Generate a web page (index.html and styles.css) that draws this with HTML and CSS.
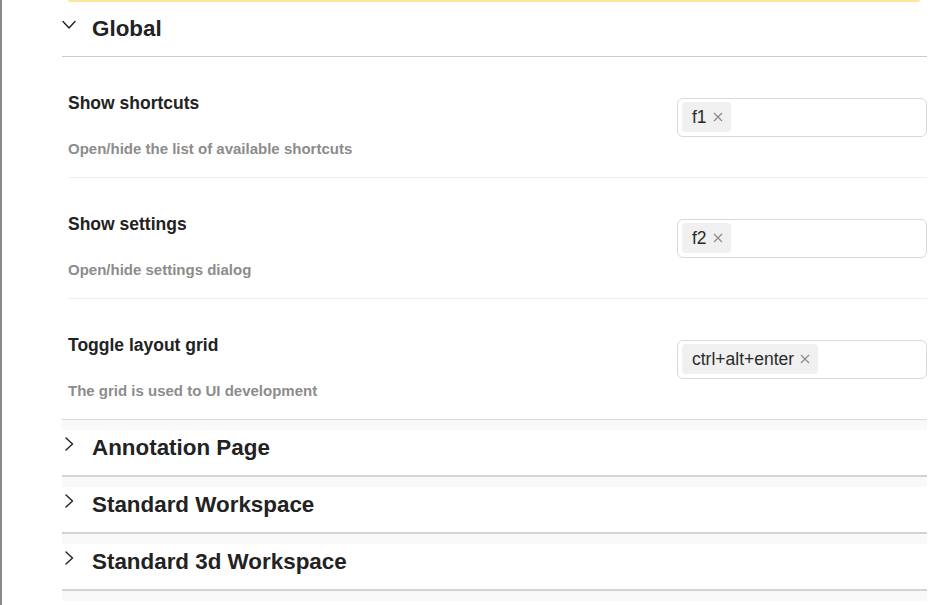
FILE: index.html
```html
<!DOCTYPE html>
<html lang="en">
<head>
<meta charset="utf-8">
<title>Shortcuts settings</title>
<link rel="stylesheet" href="styles.css">
</head>
<body>
<div class="app">
  <div class="content">
    <div class="notice-edge"></div>

    <section class="group group-open">
      <div class="group-header">
        <svg class="chev" viewBox="0 0 14 14" width="14" height="14"><polyline points="1,3.5 7,10 13,3.5"/></svg>
        <h2 class="group-title">Global</h2>
      </div>
      <div class="group-body">
        <div class="row">
          <div class="row-text">
            <div class="row-title">Show shortcuts</div>
            <div class="row-desc">Open/hide the list of available shortcuts</div>
          </div>
          <div class="keys">
            <span class="chip">f1<svg class="x" viewBox="0 0 10 10" width="10" height="10"><path d="M1 1L9 9M9 1L1 9"/></svg></span>
          </div>
        </div>
        <div class="row">
          <div class="row-text">
            <div class="row-title">Show settings</div>
            <div class="row-desc">Open/hide settings dialog</div>
          </div>
          <div class="keys">
            <span class="chip">f2<svg class="x" viewBox="0 0 10 10" width="10" height="10"><path d="M1 1L9 9M9 1L1 9"/></svg></span>
          </div>
        </div>
        <div class="row">
          <div class="row-text">
            <div class="row-title">Toggle layout grid</div>
            <div class="row-desc">The grid is used to UI development</div>
          </div>
          <div class="keys">
            <span class="chip">ctrl+alt+enter<svg class="x" viewBox="0 0 10 10" width="10" height="10"><path d="M1 1L9 9M9 1L1 9"/></svg></span>
          </div>
        </div>
      </div>
    </section>

    <section class="group group-closed">
      <div class="group-header">
        <svg class="chev" viewBox="0 0 14 14" width="14" height="14"><polyline points="4,1 10.5,7 4,13"/></svg>
        <h2 class="group-title">Annotation Page</h2>
      </div>
    </section>

    <section class="group group-closed">
      <div class="group-header">
        <svg class="chev" viewBox="0 0 14 14" width="14" height="14"><polyline points="4,1 10.5,7 4,13"/></svg>
        <h2 class="group-title">Standard Workspace</h2>
      </div>
    </section>

    <section class="group group-closed">
      <div class="group-header">
        <svg class="chev" viewBox="0 0 14 14" width="14" height="14"><polyline points="4,1 10.5,7 4,13"/></svg>
        <h2 class="group-title">Standard 3d Workspace</h2>
      </div>
    </section>

    <section class="group group-closed">
      <div class="group-header"></div>
    </section>
  </div>
</div>
</body>
</html>
```

FILE: styles.css
```css
html, body {
  margin: 0;
  padding: 0;
  height: 100%;
  overflow: hidden;
  background: #ffffff;
}

body {
  font-family: "Liberation Sans", Arial, sans-serif;
  color: #222222;
}

.app {
  min-height: 100vh;
  border-left: 2px solid #8a8a8a;
  box-sizing: border-box;
  display: flex;
}

.content {
  margin-left: 60px;
  width: 865px;
  display: flex;
  flex-direction: column;
}

.notice-edge {
  height: 2px;
  margin: 0 7px 0 6px;
  background: #fce7a0;
  border-radius: 0 0 2px 2px;
}

.group-header {
  display: flex;
  align-items: flex-start;
  background: #ffffff;
}

.chev {
  flex: none;
  width: 14px;
  height: 14px;
  margin: 2px 16px 0 0;
  fill: none;
  stroke: #222222;
  stroke-width: 1.4;
  stroke-linecap: round;
  stroke-linejoin: round;
}

.group-title {
  margin: 0;
  font-size: 22.4px;
  line-height: 26px;
  font-weight: 700;
  color: #222222;
}

.group-open {
  border-bottom: 1px solid #d9d9d9;
}

.group-open > .group-header {
  padding: 14px 0 14px;
  border-bottom: 1px solid #cccccc;
}

.group-body {
  padding-left: 6px;
}

.row {
  display: flex;
  justify-content: space-between;
  align-items: flex-start;
  padding: 36px 0 19px;
  border-bottom: 1px solid #eeeeee;
}

.row:last-child {
  border-bottom: none;
}

.row-title {
  font-size: 17.5px;
  line-height: 20px;
  font-weight: 700;
  color: #222222;
  margin-bottom: 27px;
}

.row-desc {
  font-size: 15px;
  line-height: 18px;
  font-weight: 700;
  color: #8c8c8c;
}

.keys {
  width: 250px;
  box-sizing: border-box;
  margin-top: 5px;
  padding: 3px 4px 4px;
  border: 1px solid #d9d9d9;
  border-radius: 6px;
  display: flex;
  gap: 4px;
}

.chip {
  display: inline-flex;
  align-items: center;
  height: 30px;
  padding: 0 8px 0 10px;
  background: #f0f0f0;
  border-radius: 4px;
  font-size: 17.5px;
  line-height: 30px;
  color: #2a2a2a;
}

.x {
  margin-left: 6px;
  fill: none;
  stroke: #8a8a8a;
  stroke-width: 1.2;
}

.group-closed {
  padding-top: 10px;
  background: #f9f9f9;
  border-bottom: 2px solid #d3d3d3;
}

.group-closed > .group-header {
  height: 45px;
  box-sizing: border-box;
  padding: 5px 0 14px;
}
```
